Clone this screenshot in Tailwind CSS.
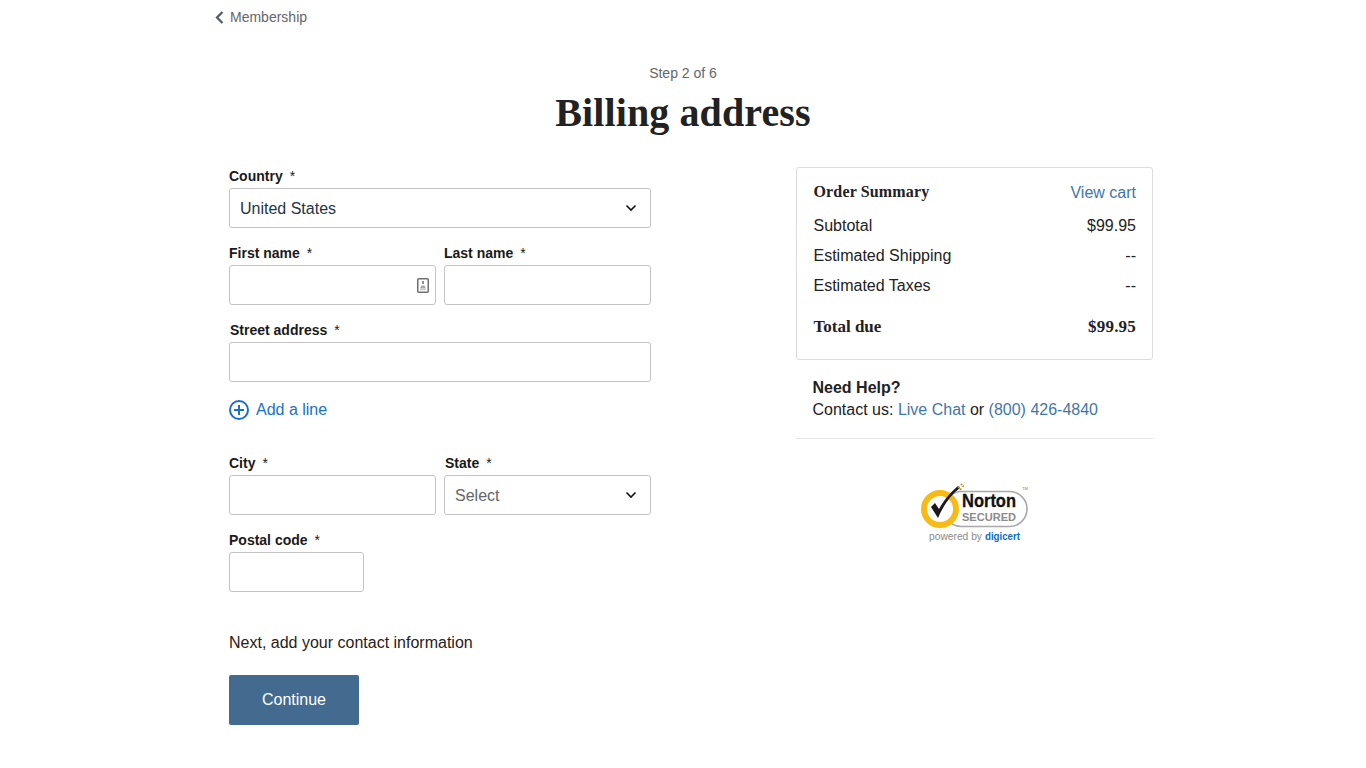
<!DOCTYPE html>
<html lang="en">
<head>
<meta charset="utf-8">
<title>Billing address</title>
<script src="https://cdn.jsdelivr.net/npm/@tailwindcss/browser@4"></script>
</head>
<body class="bg-white font-['Liberation_Sans',Arial,sans-serif] text-[#1f1f1f]">
<div class="w-[1366px] h-[768px] overflow-hidden">
  <a class="flex items-center h-[35px] pl-[215px] gap-[6px] text-sm text-[#63666a]">
    <svg class="w-[9px] h-[13px]" viewBox="0 0 9 13" fill="none"><path d="M7.5 1 L2 6.5 L7.5 12" stroke="#4f5d6b" stroke-width="2.2"/></svg>
    <span class="-mt-[2px]">Membership</span>
  </a>
  <div class="pt-[30px] text-center text-sm leading-[16px] text-[#63666a]">Step 2 of 6</div>
  <h1 class="mt-[9px] text-center font-['Liberation_Serif',serif] font-bold text-[40px] leading-[46px] tracking-[0.1px] text-[#222]">Billing address</h1>
  <div class="flex mt-[31px] pl-[229px]">
    <form class="w-[422px] shrink-0">
      <label class="flex h-[21px] items-start text-sm font-bold leading-[18px] text-[#1a1a1a]">Country<span class="font-normal ml-[7px]">*</span></label>
      <div class="flex items-center justify-between h-[40px] px-[10px] border border-[#c4c4c4] rounded-[3px] text-base text-[#1f3347]">
        <span class="pt-[2px]">United States</span>
        <svg class="w-[12px] h-[8px] mr-[3px]" viewBox="0 0 12 8" fill="none"><path d="M1.5 1.5 L6 6 L10.5 1.5" stroke="#111" stroke-width="1.6"/></svg>
      </div>
      <div class="flex gap-[8px] mt-[16px]">
        <div class="w-[207px]">
          <label class="flex h-[21px] items-start text-sm font-bold leading-[18px] text-[#1a1a1a]">First name<span class="font-normal ml-[7px]">*</span></label>
          <div class="flex items-center justify-end h-[40px] px-[6px] border border-[#c4c4c4] rounded-[3px]">
            <svg class="w-[12px] h-[15px]" viewBox="0 0 12 15" fill="none"><rect x="0.75" y="0.75" width="10.5" height="13.5" rx="1" stroke="#707070" stroke-width="1.5"/><rect x="5" y="3" width="2" height="3" fill="#909090"/><path d="M3 10.5 L4.5 7.5 H7.5 L9 10.5 Z" fill="#a8a8a8"/><rect x="3" y="11" width="6" height="1.2" fill="#c8c8c8"/></svg>
          </div>
        </div>
        <div class="w-[207px]">
          <label class="flex h-[21px] items-start text-sm font-bold leading-[18px] text-[#1a1a1a]">Last name<span class="font-normal ml-[7px]">*</span></label>
          <div class="h-[40px] border border-[#c4c4c4] rounded-[3px]"></div>
        </div>
      </div>
      <div class="mt-[16px]">
        <label class="flex h-[21px] items-start pl-px text-sm font-bold leading-[18px] text-[#1a1a1a]">Street address<span class="font-normal ml-[7px]">*</span></label>
        <div class="h-[40px] border border-[#c4c4c4] rounded-[3px]"></div>
      </div>
      <a class="flex items-center gap-[7px] mt-[17px] h-[22px] text-base text-[#1a6fc9]">
        <svg class="w-[20px] h-[20px]" viewBox="0 0 20 20" fill="none"><circle cx="10" cy="10" r="9" stroke="#1a6fc9" stroke-width="2"/><path d="M10 5 V15 M5 10 H15" stroke="#1a6fc9" stroke-width="2"/></svg>
        <span>Add a line</span>
      </a>
      <div class="flex gap-[8px] mt-[33px]">
        <div class="w-[207px]">
          <label class="flex h-[21px] items-start text-sm font-bold leading-[18px] text-[#1a1a1a]">City<span class="font-normal ml-[7px]">*</span></label>
          <div class="h-[40px] border border-[#c4c4c4] rounded-[3px]"></div>
        </div>
        <div class="w-[207px]">
          <label class="flex h-[21px] items-start pl-px text-sm font-bold leading-[18px] text-[#1a1a1a]">State<span class="font-normal ml-[7px]">*</span></label>
          <div class="flex items-center justify-between h-[40px] px-[10px] border border-[#c4c4c4] rounded-[3px] text-base text-[#63666a]">
            <span class="pt-[2px]">Select</span>
            <svg class="w-[12px] h-[8px] mr-[3px]" viewBox="0 0 12 8" fill="none"><path d="M1.5 1.5 L6 6 L10.5 1.5" stroke="#111" stroke-width="1.6"/></svg>
          </div>
        </div>
      </div>
      <div class="mt-[16px]">
        <label class="flex h-[21px] items-start text-sm font-bold leading-[18px] text-[#1a1a1a]">Postal code<span class="font-normal ml-[7px]">*</span></label>
        <div class="w-[135px] h-[40px] border border-[#c4c4c4] rounded-[3px]"></div>
      </div>
      <p class="mt-[41px] text-base leading-[20px] text-[#2a2118]">Next, add your contact information</p>
      <button type="button" class="mt-[22px] w-[130px] h-[50px] bg-[#426b8f] text-white text-base rounded-[2px]">Continue</button>
    </form>
    <aside class="w-[357px] ml-[145px] shrink-0">
      <div class="h-[193px] pl-[16.5px] pr-[16px] pt-[14px] border border-[#dcdcdc] rounded-[3px] text-base text-[#222]">
        <div class="flex justify-between items-center h-[22px]">
          <span class="-mt-[2px] font-['Liberation_Serif',serif] font-bold text-[16px] tracking-[0.15px]">Order Summary</span>
          <a class="text-[#3f76ad]">View cart</a>
        </div>
        <div class="flex justify-between mt-[12px] leading-[20px]"><span>Subtotal</span><span>$99.95</span></div>
        <div class="flex justify-between mt-[10px] leading-[20px]"><span>Estimated Shipping</span><span>--</span></div>
        <div class="flex justify-between mt-[10px] leading-[20px]"><span>Estimated Taxes</span><span>--</span></div>
        <div class="flex justify-between mt-[21px] leading-[20px] font-['Liberation_Serif',serif] font-bold text-[17px]"><span>Total due</span><span class="tracking-[0.2px]">$99.95</span></div>
      </div>
      <div class="pl-[16.5px] pt-[17px] pb-[17px] border-b border-[#e4e4e4] text-base leading-[22px] text-[#222]">
        <div class="font-bold">Need Help?</div>
        <div>Contact us: <a class="text-[#3f76ad]">Live Chat</a> or <a class="text-[#3f76ad]">(800) 426-4840</a></div>
      </div>
      <div class="flex justify-center mt-[43px] pl-[1px]">
        <svg width="112" height="64" viewBox="0 0 112 64" fill="none">
          <rect x="25" y="9.5" width="83" height="35" rx="17.5" fill="#fff" stroke="#a9a9a9" stroke-width="1.6"/>
          <circle cx="21" cy="27" r="16" fill="#fff" stroke="#f8bb15" stroke-width="6"/>
          <path d="M12 25 L19 36 C25 22 33 12 41 6 L39 4 C32 10 27 15 20 27 L16 21 Z" fill="#1a1a1a"/>
          <path d="M39 6 L45 0 M41 8 L46 2" stroke="#b98f2e" stroke-width="1.5" stroke-dasharray="2 2"/>
          <text x="43" y="25" font-family="Liberation Sans" font-weight="700" font-size="18" textLength="54" lengthAdjust="spacingAndGlyphs" fill="#111" stroke="#111" stroke-width="0.3">Norton</text>
          <text x="43" y="39" font-family="Liberation Sans" font-weight="700" font-size="11.5" textLength="54" lengthAdjust="spacingAndGlyphs" fill="#8b8b8b">SECURED</text>
          <text x="103" y="8" font-family="Liberation Sans" font-size="4" fill="#777">TM</text>
          <text x="10" y="58" font-family="Liberation Sans" font-size="10.5" textLength="53" lengthAdjust="spacingAndGlyphs" fill="#8b8b8b">powered by</text>
          <text x="66" y="58" font-family="Liberation Sans" font-size="10.5" font-weight="700" textLength="35" lengthAdjust="spacingAndGlyphs" fill="#0f6cc4">digicert</text>
        </svg>
      </div>
    </aside>
  </div>
</div>
</body>
</html>
